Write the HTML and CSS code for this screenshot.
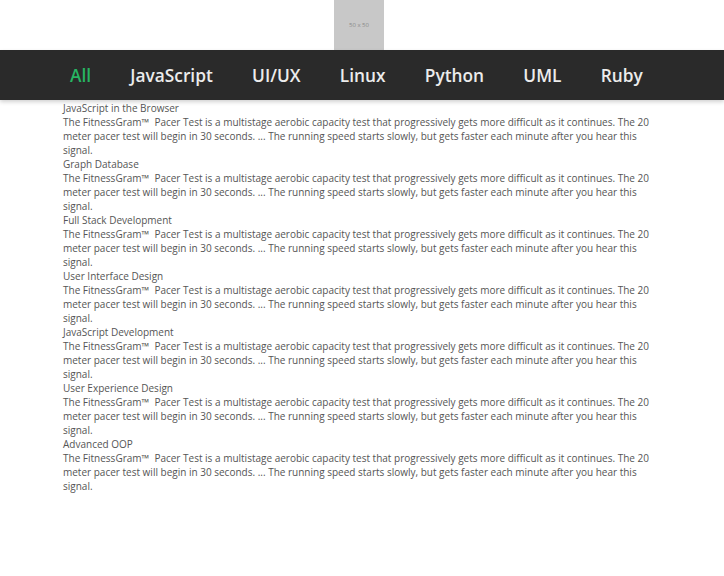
FILE: index.html
```html
<!DOCTYPE html>
<html>
<head>
<meta charset="utf-8">
<link rel="stylesheet" href="styles.css">
</head>
<body>
<header class="top">
  <div class="logo">50 x 50</div>
</header>
<nav class="nav">
  <a class="item active">All</a>
  <a class="item">JavaScript</a>
  <a class="item">UI/UX</a>
  <a class="item">Linux</a>
  <a class="item">Python</a>
  <a class="item">UML</a>
  <a class="item">Ruby</a>
</nav>
<main class="list">
  <div class="course">
    <div class="title">JavaScript in the Browser</div>
    <p class="desc">The FitnessGram™&nbsp; Pacer Test is a multistage aerobic capacity test that progressively gets more difficult as it continues. The 20 meter pacer test will begin in 30 seconds. ... The running speed starts slowly, but gets faster each minute after you hear this signal.</p>
  </div>
  <div class="course">
    <div class="title">Graph Database</div>
    <p class="desc">The FitnessGram™&nbsp; Pacer Test is a multistage aerobic capacity test that progressively gets more difficult as it continues. The 20 meter pacer test will begin in 30 seconds. ... The running speed starts slowly, but gets faster each minute after you hear this signal.</p>
  </div>
  <div class="course">
    <div class="title">Full Stack Development</div>
    <p class="desc">The FitnessGram™&nbsp; Pacer Test is a multistage aerobic capacity test that progressively gets more difficult as it continues. The 20 meter pacer test will begin in 30 seconds. ... The running speed starts slowly, but gets faster each minute after you hear this signal.</p>
  </div>
  <div class="course">
    <div class="title">User Interface Design</div>
    <p class="desc">The FitnessGram™&nbsp; Pacer Test is a multistage aerobic capacity test that progressively gets more difficult as it continues. The 20 meter pacer test will begin in 30 seconds. ... The running speed starts slowly, but gets faster each minute after you hear this signal.</p>
  </div>
  <div class="course">
    <div class="title">JavaScript Development</div>
    <p class="desc">The FitnessGram™&nbsp; Pacer Test is a multistage aerobic capacity test that progressively gets more difficult as it continues. The 20 meter pacer test will begin in 30 seconds. ... The running speed starts slowly, but gets faster each minute after you hear this signal.</p>
  </div>
  <div class="course">
    <div class="title">User Experience Design</div>
    <p class="desc">The FitnessGram™&nbsp; Pacer Test is a multistage aerobic capacity test that progressively gets more difficult as it continues. The 20 meter pacer test will begin in 30 seconds. ... The running speed starts slowly, but gets faster each minute after you hear this signal.</p>
  </div>
  <div class="course">
    <div class="title">Advanced OOP</div>
    <p class="desc">The FitnessGram™&nbsp; Pacer Test is a multistage aerobic capacity test that progressively gets more difficult as it continues. The 20 meter pacer test will begin in 30 seconds. ... The running speed starts slowly, but gets faster each minute after you hear this signal.</p>
  </div>
</main>
</body>
</html>
```
FILE: styles.css
```css
html, body {
  margin: 0;
  padding: 0;
  background: #fff;
  font-family: "Open Sans", "Liberation Sans", sans-serif;
}
.top {
  height: 50px;
  display: flex;
  padding-left: 334px;
}
.logo {
  width: 50px;
  height: 50px;
  background: #c8c8c8;
  color: #8a8a8a;
  font-size: 6px;
  display: flex;
  align-items: center;
  justify-content: center;
}
.nav {
  height: 50px;
  background: #2a2a2a;
  display: flex;
  align-items: center;
  gap: 39.3px;
  padding-left: 70px;
  box-shadow: 0 2px 4px rgba(0,0,0,0.18);
  position: relative;
}
.item {
  color: #ececec;
  font-size: 17.3px;
  font-weight: 600;
}
.item.active {
  color: #27b562;
}
.list {
  padding: 1px 0 0 63px;
  width: 592px;
}
.course {
  color: #555;
  font-size: 10px;
  line-height: 14px;
}
.desc {
  margin: 0;
}
```
